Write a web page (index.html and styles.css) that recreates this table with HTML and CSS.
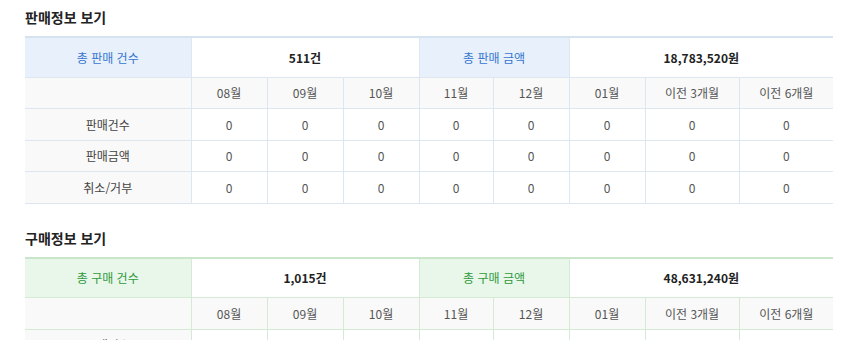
FILE: index.html
```html
<!DOCTYPE html>
<html lang="ko">
<head>
<meta charset="utf-8">
<link rel="stylesheet" href="styles.css">
</head>
<body>
<section class="sec">
  <h2 class="title">판매정보 보기</h2>
  <table class="stat blue">
    <colgroup>
      <col class="c-label"><col class="c-m"><col class="c-m"><col class="c-m"><col class="c-m2"><col class="c-m"><col class="c-m"><col class="c-w"><col class="c-w">
    </colgroup>
    <tr class="sum">
      <th class="head">총 판매 건수</th>
      <td colspan="3" class="big">511건</td>
      <th colspan="2" class="head">총 판매 금액</th>
      <td colspan="3" class="big">18,783,520원</td>
    </tr>
    <tr class="months">
      <th class="lab"></th><th>08월</th><th>09월</th><th>10월</th><th>11월</th><th>12월</th><th>01월</th><th>이전 3개월</th><th>이전 6개월</th>
    </tr>
    <tr><th class="lab">판매건수</th><td>0</td><td>0</td><td>0</td><td>0</td><td>0</td><td>0</td><td>0</td><td>0</td></tr>
    <tr><th class="lab">판매금액</th><td>0</td><td>0</td><td>0</td><td>0</td><td>0</td><td>0</td><td>0</td><td>0</td></tr>
    <tr><th class="lab">취소/거부</th><td>0</td><td>0</td><td>0</td><td>0</td><td>0</td><td>0</td><td>0</td><td>0</td></tr>
  </table>
</section>
<section class="sec">
  <h2 class="title">구매정보 보기</h2>
  <table class="stat green">
    <colgroup>
      <col class="c-label"><col class="c-m"><col class="c-m"><col class="c-m"><col class="c-m2"><col class="c-m"><col class="c-m"><col class="c-w"><col class="c-w">
    </colgroup>
    <tr class="sum">
      <th class="head">총 구매 건수</th>
      <td colspan="3" class="big">1,015건</td>
      <th colspan="2" class="head">총 구매 금액</th>
      <td colspan="3" class="big">48,631,240원</td>
    </tr>
    <tr class="months">
      <th class="lab"></th><th>08월</th><th>09월</th><th>10월</th><th>11월</th><th>12월</th><th>01월</th><th>이전 3개월</th><th>이전 6개월</th>
    </tr>
    <tr><th class="lab">구매건수</th><td>0</td><td>0</td><td>0</td><td>0</td><td>0</td><td>0</td><td>0</td><td>0</td></tr>
    <tr><th class="lab">구매금액</th><td>0</td><td>0</td><td>0</td><td>0</td><td>0</td><td>0</td><td>0</td><td>0</td></tr>
  </table>
</section>
</body>
</html>
```
FILE: styles.css
```css
html, body {
  margin: 0;
  background: #fff;
}
body {
  padding: 7px 17px 0 25px;
  font-family: "Malgun Gothic", "Noto Sans CJK KR", "Noto Sans", sans-serif;
  font-size: 12px;
  color: #555;
}
.sec {
  margin-bottom: 24px;
}
.title {
  margin: 0 0 9px;
  font-size: 14px;
  line-height: 20px;
  font-weight: 700;
  color: #222;
}
.stat {
  width: 808px;
  border-collapse: collapse;
  table-layout: fixed;
  border-top: 2px solid #d5e3f1;
}
.c-label { width: 166px; }
.c-m { width: 76px; }
.c-m2 { width: 74px; }
.c-w { width: 94px; }
.stat th, .stat td {
  padding: 0;
  text-align: center;
  font-weight: 400;
  height: 30.5px;
  border: 1px solid #dce7f2;
  color: #555;
}
.stat tr > :first-child { border-left: none; }
.stat tr > :last-child { border-right: none; }
.stat .sum th, .stat .sum td { height: 38.5px; }
.stat .lab { background: #f9f9f9; color: #444; }
.stat .months th { background: #f9f9f9; }
.stat .big { font-weight: 700; color: #222; background: #fff; }
.blue .head { background: #e7f0fb; color: #3676d0; }

.green { border-top-color: #c9e6cb; }
.green th, .green td { border-color: #d4ead5; }
.green .head { background: #e9f6ea; color: #2f9a3d; }
```
